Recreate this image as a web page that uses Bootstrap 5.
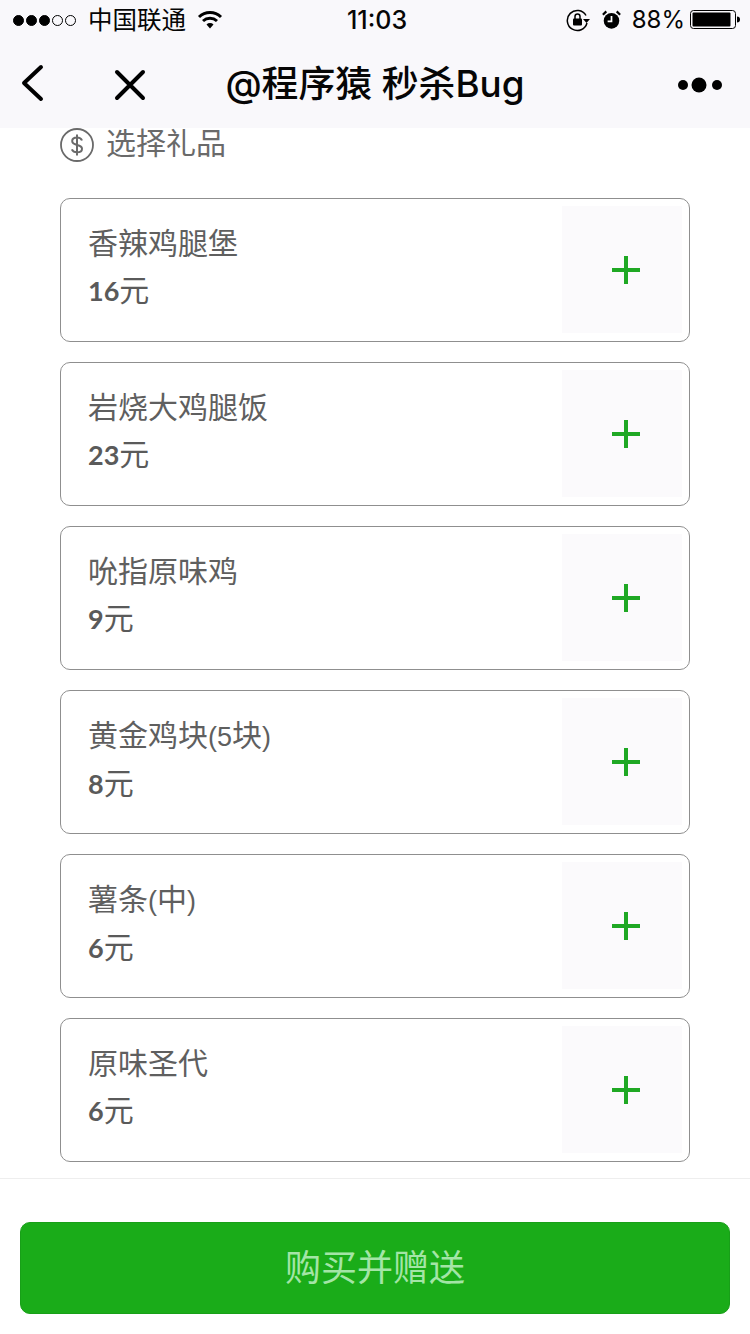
<!DOCTYPE html>
<html lang="zh">
<head>
  <meta charset="UTF-8">
  <meta name="viewport" content="width=device-width, initial-scale=1.0">
  <title>选择礼品</title>
  <link rel="stylesheet" href="https://cdn.jsdelivr.net/npm/bootstrap@5.3.2/dist/css/bootstrap.min.css">
  <style>
    body { width: 750px; height: 1334px; overflow: hidden; background: #fff; font-family: Inter, "Noto Sans CJK SC", sans-serif; }
    .top-head { height: 128px; background: #f9f8fb; color: #060606; flex: none; }
    .status-row { height: 40px; padding: 0 10px 0 13px; font-size: 24px; line-height: 40px; position: relative; }
    .signal-dot { width: 11px; height: 11px; border-radius: 50%; border: 1px solid #000; margin-right: 2px; }
    .signal-dot.on { background: #000; }
    .carrier { margin-left: 10px; font-size: 24.500px; }
    .clock { position: absolute; left: 0; right: 0; top: 0; padding-left: 4px; text-align: center; font-size: 25px; font-weight: 500; }
    .batt-pct { font-size: 24px; margin: 0 5px 0 11px; }
    .nav-row { height: 88px; position: relative; }
    .nav-title { font-size: 36.800px; font-weight: 500; line-height: 88px; text-align: center; }
    .nav-ico { position: absolute; }
    .gift-head { height: 34px; margin: 0 60px 36px; font-size: 30px; line-height: 28px; color: #6a6a6a; }
    .gift-head span { margin-top: -4px; }
    .gift-list { padding: 0 60px; gap: 20px; }
    .gift-item { height: 144px; border: 1px solid #8f8f8f; border-radius: 10px; padding: 7px 7px 8px 27px; background: #fff; flex: none; }
    .gift-name { font-family: "Liberation Sans", "Noto Sans CJK SC", sans-serif; font-size: 30px; line-height: 40px; color: #5f5f5f; margin-top: 18px; }
    .name-latin { font-size: 27px; }
    .gift-price { font-family: "Noto Sans CJK SC", sans-serif; font-size: 30px; line-height: 40px; color: #5a5a5a; margin-top: 4px; }
    .gift-price b { font-family: Lato, sans-serif; font-size: 27px; font-weight: 700; }
    .plus-box { width: 120px; height: 127px; padding-left: 8px; background: #fbfafc; }
    .bottom-bar { height: 156px; border-top: 1px solid #eeeeee; padding: 43px 20px 0; flex: none; }
    .buy-btn { height: 92px; width: 100%; background: #1aac19; border: 1px solid #189f18; border-radius: 10px; color: #a3e5a6; font-size: 36px; line-height: 1; }
  </style>
</head>
<body>
  <div class="d-flex flex-column" style="height:1334px">
    <header class="top-head">
      <div class="status-row d-flex align-items-center">
        <span class="signal-dot on"></span><span class="signal-dot on"></span><span class="signal-dot on"></span><span class="signal-dot"></span><span class="signal-dot"></span>
        <span class="carrier">中国联通</span>
        <svg style="margin-left:11px" width="26" height="20" viewBox="0 0 26 20"><path d="M2 7a16 16 0 0 1 22 0M6 11a10.500 10.500 0 0 1 14 0" fill="none" stroke="#000" stroke-width="3"/><path d="M9.500 14.500a5 5 0 0 1 7 0L13 18.500z" fill="#000"/></svg>
        <span class="clock">11:03</span>
        <span class="ms-auto d-flex align-items-center">
          <svg width="24" height="24" viewBox="0 0 24 24"><path d="M20 7.500A10 10 0 1 0 21 15" fill="none" stroke="#000" stroke-width="1.500"/><path d="M17 11h7l-3.500 4z" fill="#000"/><rect x="7" y="10.500" width="9" height="7" rx="1" fill="#000"/><path d="M9 11V8.500a2.500 2.500 0 0 1 5 0V11" fill="none" stroke="#000" stroke-width="1.500"/></svg>
          <svg style="margin-left:12px" width="19" height="22" viewBox="0 0 22 24"><circle cx="11" cy="13" r="9" fill="#000"/><path d="M11 7.500V13.500H6.500" fill="none" stroke="#fff" stroke-width="2"/><path d="M1 6l4-4M21 6l-4-4" stroke="#000" stroke-width="2.500"/></svg>
          <span class="batt-pct">88%</span>
          <svg width="50" height="20" viewBox="0 0 50 20"><rect x="0.500" y="0.500" width="45" height="18" rx="3" fill="none" stroke="#000"/><rect x="2.500" y="2.500" width="38" height="14" rx="1" fill="#000"/><path d="M47 6.500c2 0 3 1 3 3s-1 3-3 3z" fill="#000"/></svg>
        </span>
      </div>
      <div class="nav-row">
        <svg class="nav-ico" style="left:20px;top:24px" width="24" height="38" viewBox="0 0 24 38"><path d="M21 3 4 19l17 16" fill="none" stroke="#000" stroke-width="4" stroke-linecap="round" stroke-linejoin="round"/></svg>
        <svg class="nav-ico" style="left:114px;top:29px" width="32" height="32" viewBox="0 0 32 32"><path d="M3 3l26 26M29 3 3 29" fill="none" stroke="#000" stroke-width="4" stroke-linecap="round"/></svg>
        <div class="nav-title">@程序猿 秒杀Bug</div>
        <svg class="nav-ico" style="left:676px;top:36px" width="48" height="24" viewBox="0 0 48 24"><circle cx="7" cy="9" r="5" fill="#000"/><circle cx="23" cy="9" r="7.500" fill="#000"/><circle cx="41" cy="9" r="5" fill="#000"/></svg>
      </div>
    </header>

    <main class="flex-grow-1">
      <div class="gift-head d-flex align-items-center">
        <svg class="flex-none" width="34" height="34" viewBox="0 0 34 34"><circle cx="17" cy="17" r="16" fill="none" stroke="#6a6a6a" stroke-width="1.800"/><path d="M22 12.500c-.8-2-3-3-5-3-3 0-4.800 1.500-4.800 3.600 0 2.200 2 3.200 4.800 3.800 3 .6 5 1.500 5 3.800 0 2.200-2 3.600-5 3.600-2.300 0-4.300-1-5.200-3M17 6.500v21" fill="none" stroke="#6a6a6a" stroke-width="2"/></svg>
        <span class="ms-2 ps-1">选择礼品</span>
      </div>
      <div class="gift-list d-flex flex-column" id="gift-list"></div>
    </main>

    <footer class="bottom-bar">
      <button class="buy-btn btn p-0" type="button">购买并赠送</button>
    </footer>
  </div>

  <script>
    const gifts = [
      ['香辣鸡腿堡', 16],
      ['岩烧大鸡腿饭', 23],
      ['吮指原味鸡', 9],
      ['黄金鸡块(5块)', 8],
      ['薯条(中)', 6],
      ['原味圣代', 6]
    ];
    const list = document.getElementById('gift-list');
    gifts.forEach(g => {
      const name = g[0].replace(/[()0-9]/g, m => `<span class="name-latin">${m}</span>`);
      const row = document.createElement('div');
      row.className = 'gift-item d-flex justify-content-between';
      row.innerHTML = `
        <div>
          <div class="gift-name">${name}</div>
          <div class="gift-price"><b>${g[1]}</b>元</div>
        </div>
        <div class="plus-box d-flex align-items-center justify-content-center">
          <svg width="28" height="28" viewBox="0 0 28 28"><path d="M0 14h28M14 0v28" fill="none" stroke="#1fa824" stroke-width="4"/></svg>
        </div>`;
      list.appendChild(row);
    });
  </script>
  <script src="https://cdn.jsdelivr.net/npm/bootstrap@5.3.2/dist/js/bootstrap.bundle.min.js"></script>
</body>
</html>
